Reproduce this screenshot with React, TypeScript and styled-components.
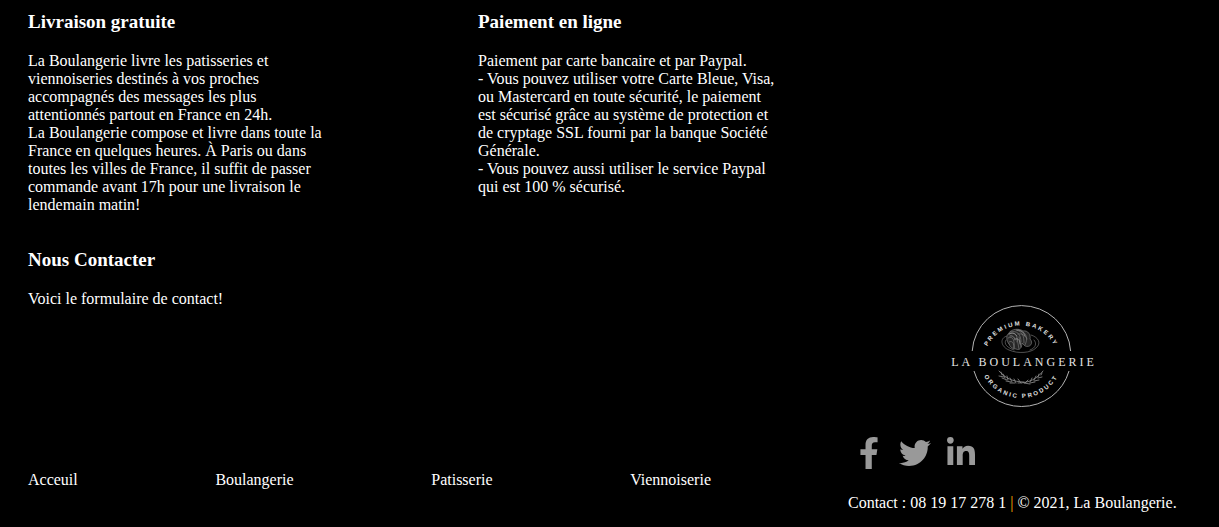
import React from "react";
import styled, { createGlobalStyle } from "styled-components";
import { FaFacebookF, FaLinkedinIn, FaTwitter } from "react-icons/fa";

const GlobalStyle = createGlobalStyle`
  * {
    box-sizing: border-box;
  }

  body {
    margin: 0;
    background: #000;
    color: #fff;
    font-family: "Liberation Serif", "Times New Roman", serif;
    font-size: 16px;
    line-height: 18px;
  }
`;

const Footer = styled.footer`
  display: flex;
  min-height: 100vh;
  padding: 11px 24px 15px 28px;
`;

const Main = styled.div`
  flex: 1;
  display: flex;
  flex-direction: column;
  justify-content: space-between;
  padding-bottom: 23px;
`;

const Sections = styled.div`
  display: flex;
  flex-wrap: wrap;
  gap: 35px 150px;
`;

const Section = styled.section`
  width: 300px;
`;

const Title = styled.h3`
  margin: 0 0 19px;
  font-size: 19px;
  line-height: 22px;
`;

const Text = styled.p`
  margin: 0;
`;

const Nav = styled.nav`
  display: flex;
  justify-content: space-between;
  padding-right: 137px;
`;

const NavLink = styled.a`
  color: inherit;
  text-decoration: none;
`;

const Aside = styled.div`
  flex: 0 0 347px;
  display: flex;
  flex-direction: column;
  justify-content: flex-end;
  gap: 24px;
`;

const Logo = styled.svg`
  align-self: center;
  width: 164px;
  height: 112px;
`;

const Brand = styled.text`
  font-family: "Liberation Serif", serif;
  font-size: 12px;
  letter-spacing: 3px;
  fill: #e4e4e4;
`;

const Motto = styled.text`
  font-family: "Liberation Sans", sans-serif;
  font-size: 6px;
  font-weight: bold;
  letter-spacing: 2px;
  fill: #e4e4e4;
`;

const Social = styled.div`
  display: flex;
  gap: 4px;
`;

const SocialLink = styled.a`
  display: flex;
  align-items: center;
  justify-content: center;
  width: 42px;
  height: 34px;
  color: #999;
  font-size: 32px;
`;

const Separator = styled.span`
  color: #ffa500;
`;

const pages = ["Acceuil", "Boulangerie", "Patisserie", "Viennoiserie"];

const networks = [
  { name: "Facebook", Icon: FaFacebookF },
  { name: "Twitter", Icon: FaTwitter },
  { name: "LinkedIn", Icon: FaLinkedinIn },
];

function BakeryLogo() {
  return (
    <Logo viewBox="0 0 164 112" role="img" aria-label="La Boulangerie">
      <defs>
        <path id="arc-top" d="M43.5 63A37.5 37.5 0 0 1 118.5 63" />
        <path id="arc-bottom" d="M39 56A42 42 0 0 0 123 56" />
      </defs>
      <g fill="none" stroke="#b4b4b4" strokeWidth="1">
        <path d="M32.2 51A49.3 48.5 0 0 1 130.6 51" />
        <path d="M34 71A49.3 48.5 0 0 0 129 71" />
      </g>
      <Motto textAnchor="middle">
        <textPath href="#arc-top" startOffset="50%">PREMIUM BAKERY</textPath>
      </Motto>
      {/* croissant on its plate */}
      <g fill="none" stroke="#858585" strokeWidth="0.6" strokeLinecap="round">
        <path d="M67 36C59 38 61 47 69 50C78 54 91 53 96 48C102 43 98 37 91 35" />
        <path d="M66 40C63 44 68 48 74 50M90 50C96 48 97 43 94 40" />
        <path fill="#262626" d="M69 44C66 41 66 35 69 33C71 29 79 28 83 31C88 30 91 35 90 39C94 43 90 48 85 46L82 43C82 47 80 51 76 49C72 49 70 47 69 44Z" />
        <path d="M69 34C75 31 78 36 77 42M70 32C77 30 81 34 81 42M76 30C83 31 84 37 84 43M81 31C87 33 88 39 85 45M68 38C73 35 75 41 74 48M69 42C73 40 74 44 74 48M78 34C82 33 86 36 87 39M77 38L79 49M79 37L81 47" />
        <path stroke="#b0b0b0" d="M69 34C72 32 75 33 77 36M77 30C82 30 84 33 85 36M75 39C79 38 80 41 80 44M70 36C73 35 75 38 75 40" />
      </g>
      <Brand x="84" y="66" textAnchor="middle">LA BOULANGERIE</Brand>
      {/* ears of wheat */}
      <g fill="none" stroke="#929292" strokeWidth="0.8" strokeLinecap="round">
        <path d="M59 71C65 78 73 82 84 82M103 71C97 79 89 83 78 83" />
        <path d="M62 75L61 72M65 78L63 74M68 80L67 76M72 82L70 78M76 83L74 79M81 83L78 79M64 77L59 76M67 80L62 78M71 82L66 81M75 83L70 83M101 75L102 73M98 77L99 74M94 80L96 76M90 82L92 78M85 83L88 80M98 78L102 77M94 81L99 80M90 83L95 82M84 83L90 84" />
      </g>
      <Motto textAnchor="middle">
        <textPath href="#arc-bottom" startOffset="50%">ORGANIC PRODUCT</textPath>
      </Motto>
    </Logo>
  );
}

export default function App() {
  return (
    <>
      <GlobalStyle />
      <Footer>
        <Main>
          <Sections>
            <Section>
              <Title>Livraison gratuite</Title>
              <Text>
                La Boulangerie livre les patisseries et viennoiseries destinés à vos proches
                accompagnés des messages les plus attentionnés partout en France en 24h.
                <br />
                La Boulangerie compose et livre dans toute la France en quelques heures. À Paris
                ou dans toutes les villes de France, il suffit de passer commande avant 17h pour
                une livraison le lendemain matin!
              </Text>
            </Section>
            <Section>
              <Title>Paiement en ligne</Title>
              <Text>
                Paiement par carte bancaire et par Paypal.
                <br />- Vous pouvez utiliser votre Carte Bleue, Visa, ou Mastercard en toute
                sécurité, le paiement est sécurisé grâce au système de protection et de cryptage
                SSL fourni par la banque Société Générale.
                <br />- Vous pouvez aussi utiliser le service Paypal qui est 100 % sécurisé.
              </Text>
            </Section>
            <Section>
              <Title>Nous Contacter</Title>
              <Text>Voici le formulaire de contact!</Text>
            </Section>
          </Sections>
          <Nav>
            {pages.map((page) => (
              <NavLink key={page} href="#">
                {page}
              </NavLink>
            ))}
          </Nav>
        </Main>
        <Aside>
          <BakeryLogo />
          <Social>
            {networks.map(({ name, Icon }) => (
              <SocialLink key={name} href="#" aria-label={name}>
                <Icon />
              </SocialLink>
            ))}
          </Social>
          <Text>
            Contact : 08 19 17 278 1 <Separator>|</Separator> © 2021, La Boulangerie.
          </Text>
        </Aside>
      </Footer>
    </>
  );
}
